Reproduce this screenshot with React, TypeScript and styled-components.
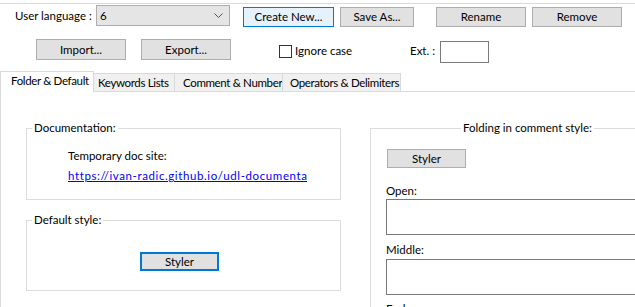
import React from "react";
import styled, { createGlobalStyle } from "styled-components";

const GlobalStyle = createGlobalStyle`
  html, body { margin: 0; padding: 0; background: #ffffff; }
  body {
    font-family: Lato, "Noto Sans", sans-serif;
    font-size: 11.5px;
    color: #000000;
    overflow: hidden;
  }
  * { box-sizing: border-box; }
`;

const Dialog = styled.div`
  width: 635px;
  height: 307px;
  overflow: hidden;
  padding-top: 3px;
  background: #ffffff;
`;

const TopRule = styled.div`
  height: 1px;
  background: #dadada;
`;

const Row = styled.div<{ $top: number; $height: number }>`
  display: flex;
  align-items: flex-start;
  margin-top: ${(p) => p.$top}px;
  height: ${(p) => p.$height}px;
`;

const FieldLabel = styled.span<{ $ml: number; $w: number; $h: number; $mt?: number }>`
  flex-shrink: 0;
  margin-left: ${(p) => p.$ml}px;
  margin-top: ${(p) => p.$mt ?? 0}px;
  width: ${(p) => p.$w}px;
  height: ${(p) => p.$h}px;
  line-height: ${(p) => p.$h}px;
  white-space: nowrap;
`;

const Combo = styled.div`
  flex-shrink: 0;
  width: 134px;
  height: 21px;
  border: 1px solid #adadad;
  background: #e5e5e5;
  display: flex;
  align-items: center;
  justify-content: space-between;
  padding: 0 6px 0 3px;
`;

const Button = styled.button<{ $ml: number; $mt?: number; $w: number; $h: number; $default?: boolean; $focus?: boolean }>`
  flex-shrink: 0;
  margin: ${(p) => p.$mt ?? 0}px 0 0 ${(p) => p.$ml}px;
  width: ${(p) => p.$w}px;
  height: ${(p) => p.$h}px;
  padding: 0;
  font: inherit;
  color: #000;
  background: ${(p) => (p.$default ? "#e5f1fb" : "#e1e1e1")};
  border: ${(p) => (p.$focus ? "2px solid #0078d7" : p.$default ? "1px solid #0078d7" : "1px solid #adadad")};
  line-height: 1;
`;

const CheckBox = styled.span`
  flex-shrink: 0;
  margin: 6px 0 0 48px;
  width: 13px;
  height: 13px;
  border: 1px solid #333333;
  background: #ffffff;
`;

const TextInput = styled.div<{ $w: number; $h: number; $mt?: number; $mb?: number }>`
  flex-shrink: 0;
  width: ${(p) => p.$w}px;
  height: ${(p) => p.$h}px;
  margin-top: ${(p) => p.$mt ?? 0}px;
  margin-bottom: ${(p) => p.$mb ?? 0}px;
  border: 1px solid #7a7a7a;
  background: #ffffff;
`;

const TabStrip = styled.div`
  display: flex;
  align-items: flex-end;
  height: 20px;
  margin-top: 8px;
`;

const Tab = styled.div<{ $w: number; $active?: boolean; $pl: number }>`
  position: relative;
  flex-shrink: 0;
  width: ${(p) => p.$w}px;
  height: ${(p) => (p.$active ? 21 : 18)}px;
  margin-bottom: ${(p) => (p.$active ? -1 : 0)}px;
  margin-left: ${(p) => (p.$active ? 0 : -1)}px;
  z-index: ${(p) => (p.$active ? 2 : 1)};
  padding-left: ${(p) => p.$pl}px;
  background: ${(p) => (p.$active ? "#ffffff" : "#f0f0f0")};
  border: 1px solid #d9d9d9;
  border-bottom: none;
  line-height: 17px;
  letter-spacing: -0.35px;
  white-space: nowrap;
  overflow: hidden;
  &:first-child { margin-left: 0; }
`;

const Panel = styled.div`
  display: flex;
  align-items: flex-start;
  height: 216px;
  border-top: 1px solid #d9d9d9;
  border-left: 1px solid #d9d9d9;
  padding: 28px 0 0 25px;
`;

const Column = styled.div<{ $ml?: number }>`
  flex-shrink: 0;
  width: 315px;
  margin-left: ${(p) => p.$ml ?? 0}px;
  display: flex;
  flex-direction: column;
`;

const GroupBox = styled.fieldset<{ $mt?: number }>`
  margin: ${(p) => p.$mt ?? 0}px 0 0 0;
  padding: 0;
  min-inline-size: 0;
  width: 315px;
  border: 1px solid #dcdcdc;
`;

const Legend = styled.legend<{ $center?: boolean }>`
  padding: 0 2px;
  margin-left: ${(p) => (p.$center ? "auto" : "5px")};
  margin-right: ${(p) => (p.$center ? "auto" : "0")};
  line-height: 16px;
  height: 16px;
`;

const GroupBody = styled.div<{ $pt: number; $pb: number; $pl: number }>`
  display: flex;
  flex-direction: column;
  align-items: flex-start;
  padding: ${(p) => p.$pt}px 0 ${(p) => p.$pb}px ${(p) => p.$pl}px;
`;

const Text = styled.div<{ $mt?: number }>`
  margin-top: ${(p) => p.$mt ?? 0}px;
  line-height: 16px;
  white-space: nowrap;
`;

const LinkClip = styled.div<{ $mt?: number }>`
  width: 239px;
  overflow: hidden;
  margin-top: ${(p) => p.$mt ?? 0}px;
  line-height: 16px;
  white-space: nowrap;
`;

const Link = styled.a`
  color: #0000ff;
  text-decoration: underline;
  letter-spacing: 0.6px;
`;

const Chevron = () => (
  <svg width="9" height="5" viewBox="0 0 9 5">
    <polyline points="0.5,0.5 4.5,4.5 8.5,0.5" fill="none" stroke="#555" strokeWidth="1" />
  </svg>
);

export default function App() {
  return (
    <>
      <GlobalStyle />
      <Dialog>
        <TopRule />
        <Row $top={1} $height={23}>
          <FieldLabel $ml={15} $w={81} $h={21}>User language :</FieldLabel>
          <Combo>
            <span>6</span>
            <Chevron />
          </Combo>
          <Button $ml={13} $mt={2} $w={91} $h={20} $default>Create New...</Button>
          <Button $ml={6} $mt={2} $w={74} $h={20}>Save As...</Button>
          <Button $ml={22} $mt={2} $w={90} $h={20}>Rename</Button>
          <Button $ml={6} $mt={2} $w={90} $h={20}>Remove</Button>
        </Row>
        <Row $top={11} $height={24}>
          <Button $ml={36} $w={90} $h={21}>Import...</Button>
          <Button $ml={15} $w={90} $h={21}>Export...</Button>
          <CheckBox />
          <FieldLabel $ml={3} $w={115} $h={24}>Ignore case</FieldLabel>
          <FieldLabel $ml={0} $w={30} $h={24}>Ext. :</FieldLabel>
          <TextInput $w={49} $h={22} $mt={2} />
        </Row>
        <TabStrip>
          <Tab $w={94} $pl={10} $active>Folder &amp; Default</Tab>
          <Tab $w={82} $pl={4}>Keywords Lists</Tab>
          <Tab $w={109} $pl={8}>Comment &amp; Number</Tab>
          <Tab $w={119} $pl={7}>Operators &amp; Delimiters</Tab>
        </TabStrip>
        <Panel>
          <Column>
            <GroupBox>
              <Legend>Documentation:</Legend>
              <GroupBody $pt={12} $pb={15} $pl={41}>
                <Text>Temporary doc site:</Text>
                <LinkClip $mt={4}>
                  <Link href="#">https://ivan-radic.github.io/udl-documentation/</Link>
                </LinkClip>
              </GroupBody>
            </GroupBox>
            <GroupBox $mt={12}>
              <Legend>Default style:</Legend>
              <GroupBody $pt={24} $pb={19} $pl={113}>
                <Button $ml={0} $w={79} $h={19} $focus>Styler</Button>
              </GroupBody>
            </GroupBox>
          </Column>
          <Column $ml={29}>
            <GroupBox>
              <Legend $center>Folding in comment style:</Legend>
              <GroupBody $pt={13} $pb={10} $pl={15}>
                <Button $ml={1} $w={79} $h={19}>Styler</Button>
                <Text $mt={15}>Open:</Text>
                <TextInput $w={282} $h={36} />
                <Text $mt={7}>Middle:</Text>
                <TextInput $w={282} $h={36} $mt={1} />
                <Text $mt={6}>End:</Text>
                <TextInput $w={282} $h={36} />
              </GroupBody>
            </GroupBox>
          </Column>
        </Panel>
      </Dialog>
    </>
  );
}
